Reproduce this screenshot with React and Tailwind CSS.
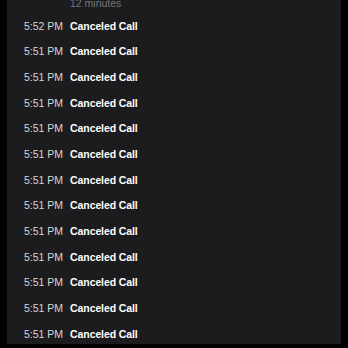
const calls = [
  { time: '5:52 PM', label: 'Canceled Call' },
  ...Array.from({ length: 12 }, () => ({ time: '5:51 PM', label: 'Canceled Call' })),
]

const App = () => {
  return (
    <div className="h-[348px] overflow-hidden bg-black" style={{ fontFamily: '"Liberation Sans", Arial, sans-serif' }}>
      <div className="ml-[7px] w-[334px] h-full bg-[#1c1c1e] pl-[17px]">
        <div className="-mt-[4px] h-[14px] pl-[46px] text-[10.5px] leading-[14px] text-[#76767a]">12 minutes</div>
        <div className="mt-[3.7px]">
          {calls.map((call, i) => (
            <div key={i} className="flex items-center gap-[7px] h-[25.67px] text-[10.5px]">
              <span className="text-[#d6d6d8]">{call.time}</span>
              <span className="font-bold text-white tracking-[-0.1px]">{call.label}</span>
            </div>
          ))}
        </div>
      </div>
    </div>
  )
}

export default App
